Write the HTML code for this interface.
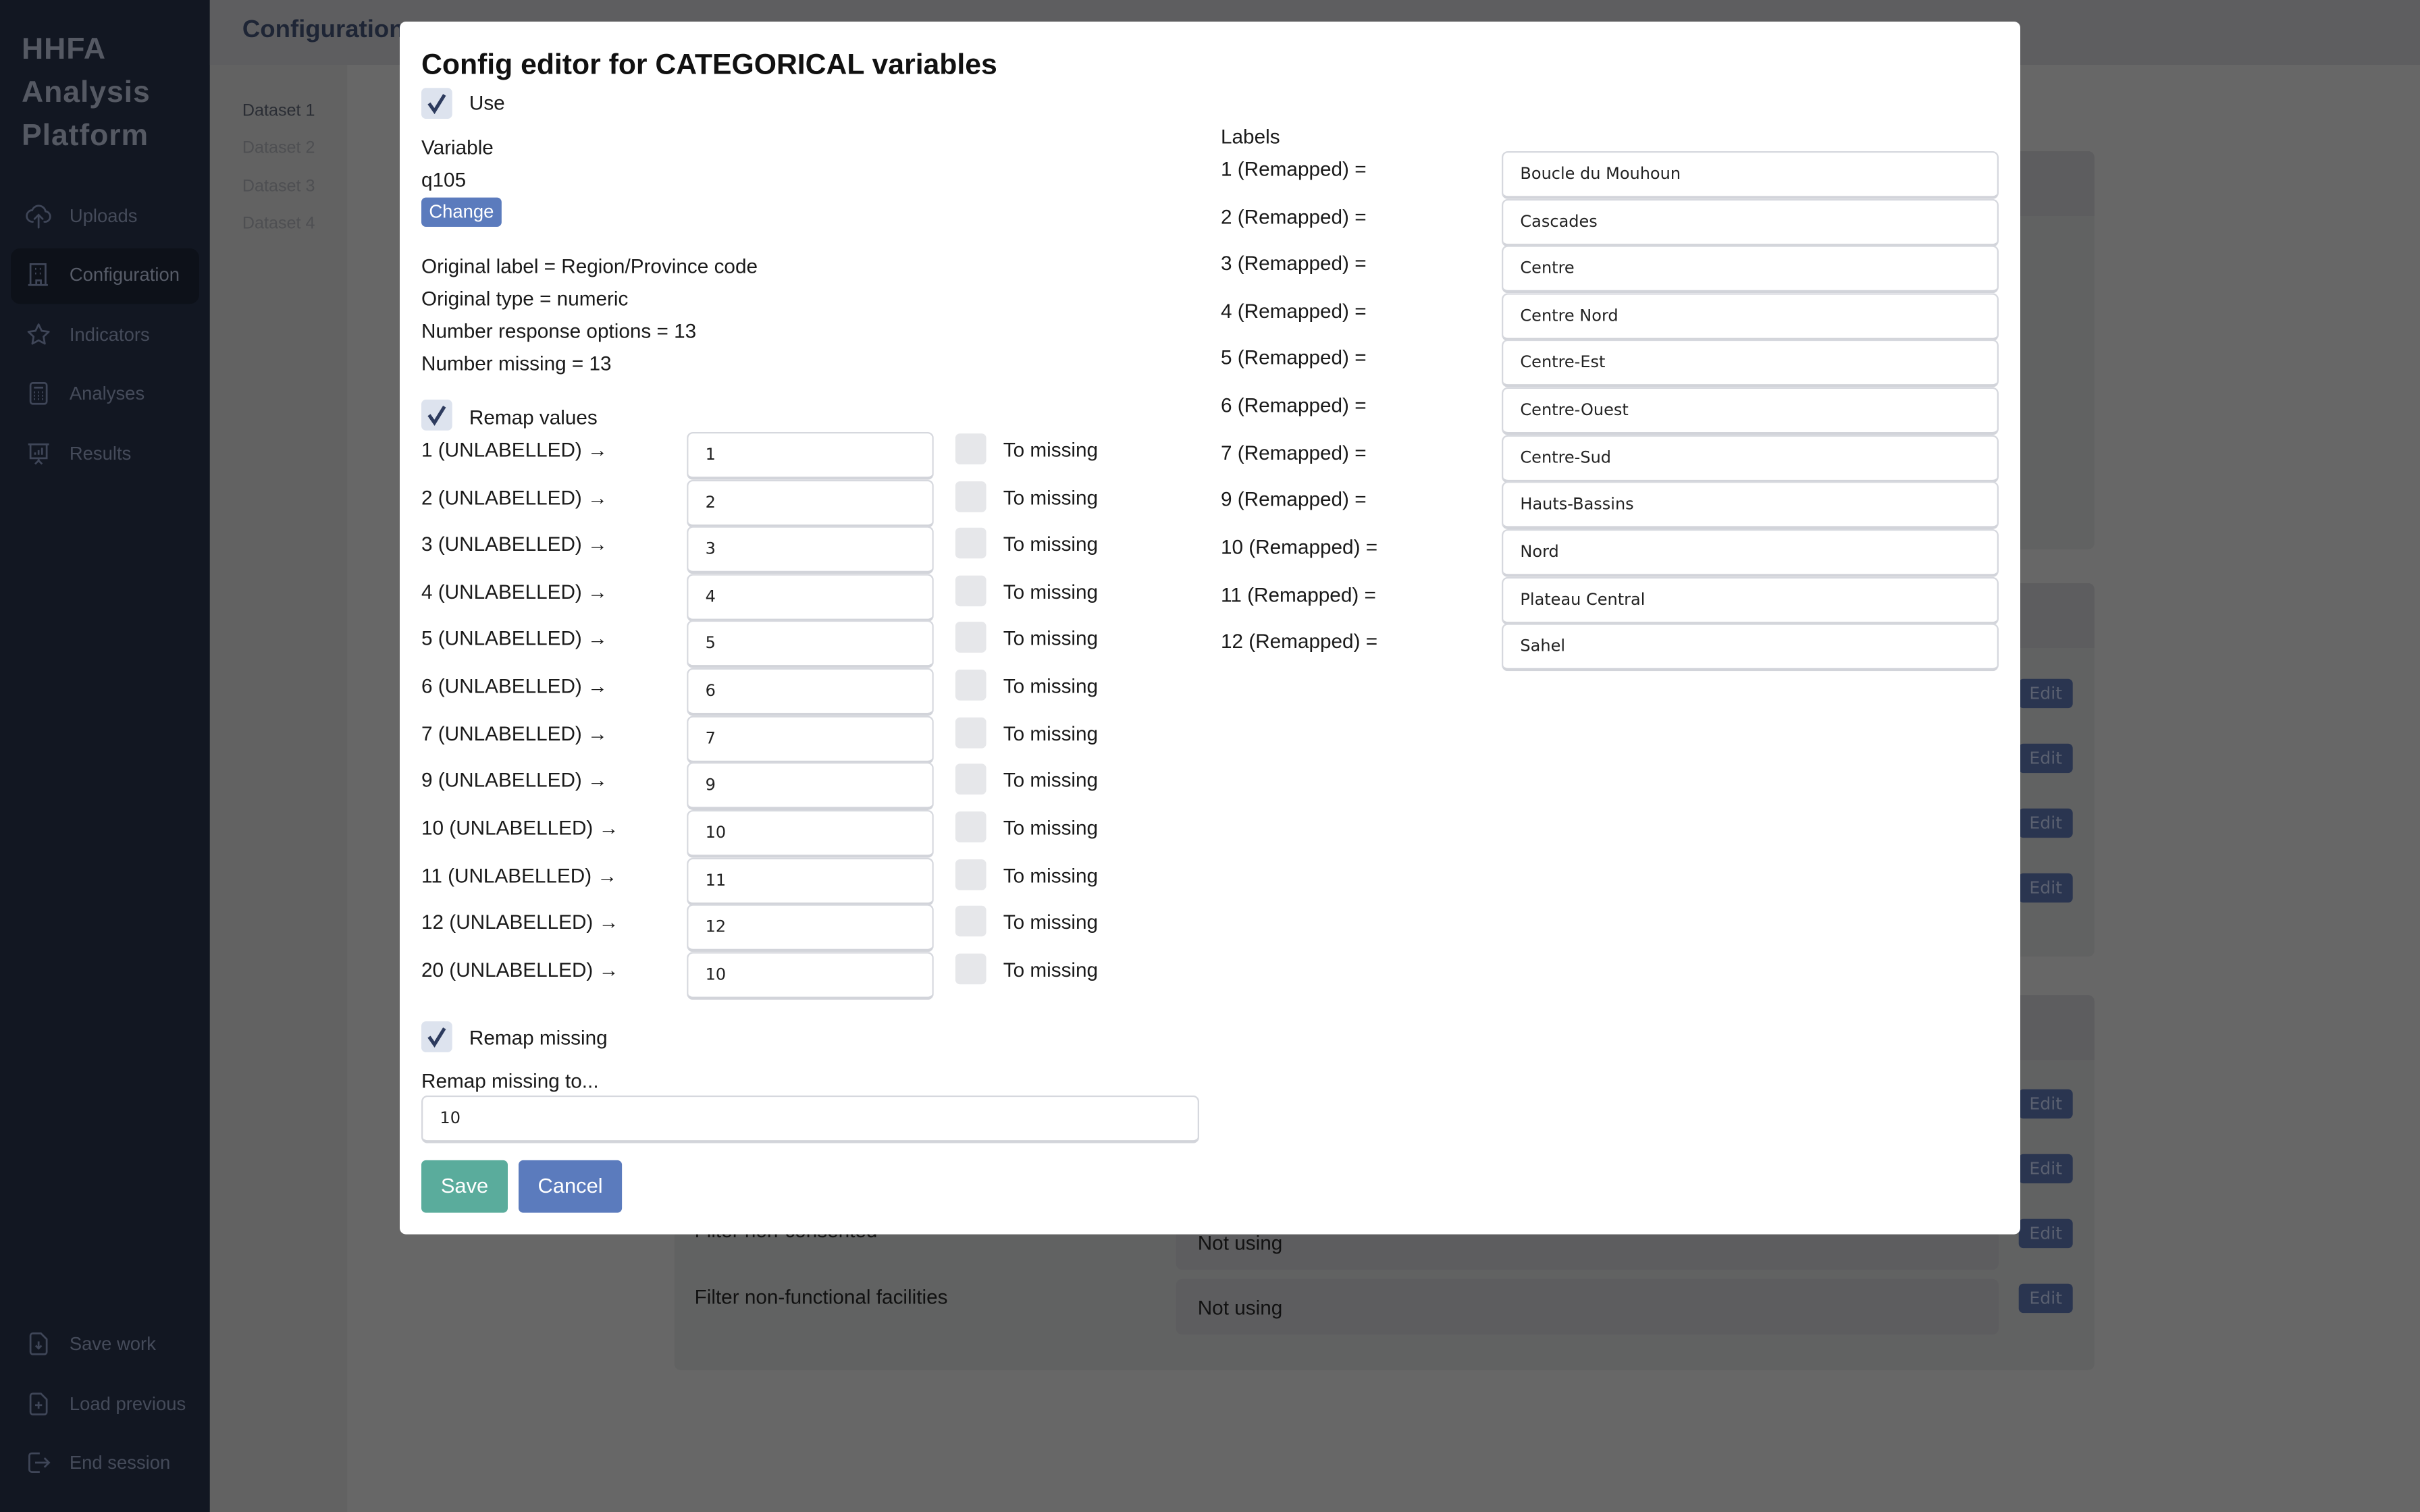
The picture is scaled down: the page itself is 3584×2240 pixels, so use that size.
<!DOCTYPE html>
<html><head><meta charset="utf-8">
<style>
*{box-sizing:border-box;margin:0;padding:0}
html,body{width:3584px;height:2240px;overflow:hidden;background:#676767}
#w{position:absolute;left:0;top:0;width:1568px;height:980px;transform:scale(2.2857143);transform-origin:0 0;font-family:"Liberation Sans",sans-serif;background:#676767}
.a{position:absolute;white-space:nowrap}
.t{font-size:13px;line-height:18px;color:#1a1a1a}
.nav{font-size:12px;color:#454b5a;line-height:16px}
.ic{position:absolute;left:16px;width:18px;height:18px}
.inp{position:absolute;background:#fff;border:1px solid #d6d8de;border-bottom:2px solid #d2d4da;border-radius:4px;font-family:"DejaVu Sans",sans-serif;font-size:10.5px;color:#222;padding-left:11px;line-height:28px}
.cb{position:absolute;width:20px;height:20px;border-radius:3px;background:#dde3ee}
.cb svg{position:absolute;left:3px;top:3px}
.cbe{position:absolute;width:20px;height:20px;border-radius:3px;background:#e6e7ea}
.edit{position:absolute;left:1308px;width:35px;height:19px;background:#2a3550;border-radius:3px;color:#5a6070;font-size:11px;text-align:center;line-height:19px;font-family:"DejaVu Sans",sans-serif}
</style></head><body><div id="w">
<div class="a" style="left:0;top:0;width:136px;height:980px;background:#121722"></div>
<div class="a" style="left:14px;top:18px;font-size:19.5px;line-height:28px;font-weight:bold;color:#555963;white-space:normal;width:120px;letter-spacing:0.4px">HHFA<br>Analysis<br>Platform</div>
<div class="a" style="left:7px;top:161px;width:122px;height:36px;background:#0d1119;border-radius:6px"></div>
<svg class="ic" style="top:131px" viewBox="0 0 24 24" fill="none" stroke="#3f4658" stroke-width="1.6" stroke-linecap="round"><path d="M7 17a5 5 0 0 1-.5-10A6 6 0 0 1 18 8a4.5 4.5 0 0 1-1 9"/><path d="M12 22V11M8.5 14.5 12 11l3.5 3.5"/></svg>
<div class="a nav" style="left:45px;top:132px">Uploads</div>
<svg class="ic" style="top:169px" viewBox="0 0 24 24" fill="none" stroke="#3f4658" stroke-width="1.6"><path d="M5 21V3h13v18M3 21h17M10 21v-4h4v4M9 7h1M13 7h1M9 11h1M13 11h1"/></svg>
<div class="a nav" style="left:45px;top:170px;color:#575c68">Configuration</div>
<svg class="ic" style="top:208px" viewBox="0 0 24 24" fill="none" stroke="#3f4658" stroke-width="1.6" stroke-linejoin="round"><path d="M12 3l2.7 5.6 6.1.8-4.5 4.2 1.1 6.1L12 16.8 6.6 19.7l1.1-6.1L3.2 9.4l6.1-.8z"/></svg>
<div class="a nav" style="left:45px;top:209px">Indicators</div>
<svg class="ic" style="top:246px" viewBox="0 0 24 24" fill="none" stroke="#3f4658" stroke-width="1.6"><rect x="5" y="3" width="14" height="18" rx="2"/><path d="M8 7h8M8 11h1M11.5 11h1M15 11h1M8 14h1M11.5 14h1M15 14h1M8 17h1M11.5 17h1M15 17h1"/></svg>
<div class="a nav" style="left:45px;top:247px">Analyses</div>
<svg class="ic" style="top:285px" viewBox="0 0 24 24" fill="none" stroke="#3f4658" stroke-width="1.6"><path d="M3 4h18M5 4v12h14V4M9 13v-2M12 13V9M15 13V7M12 16v2M9 21l3-3 3 3"/></svg>
<div class="a nav" style="left:45px;top:286px">Results</div>
<svg class="ic" style="top:862px" viewBox="0 0 24 24" fill="none" stroke="#3f4658" stroke-width="1.6"><path d="M14 3H7a2 2 0 0 0-2 2v14a2 2 0 0 0 2 2h10a2 2 0 0 0 2-2V8z"/><path d="M12 10v6M9.5 13.5 12 16l2.5-2.5"/></svg>
<div class="a nav" style="left:45px;top:863px">Save work</div>
<svg class="ic" style="top:901px" viewBox="0 0 24 24" fill="none" stroke="#3f4658" stroke-width="1.6"><path d="M14 3H7a2 2 0 0 0-2 2v14a2 2 0 0 0 2 2h10a2 2 0 0 0 2-2V8z"/><path d="M12 10v6M9 13h6"/></svg>
<div class="a nav" style="left:45px;top:902px">Load previous</div>
<svg class="ic" style="top:939px" viewBox="0 0 24 24" fill="none" stroke="#3f4658" stroke-width="1.6"><path d="M13 4H6a2 2 0 0 0-2 2v12a2 2 0 0 0 2 2h7M9 12h12M17 8l4 4-4 4"/></svg>
<div class="a nav" style="left:45px;top:940px">End session</div>
<div class="a" style="left:136px;top:0;width:89px;height:980px;background:#626262"></div>
<div class="a" style="left:136px;top:0;width:1432px;height:42px;background:#5e5e60"></div>
<div class="a" style="left:157px;top:11px;font-size:16px;font-weight:bold;color:#1e2535">Configuration</div>
<div class="a" style="left:157px;top:66px;font-size:11px;color:#2a2d34">Dataset 1</div>
<div class="a" style="left:157px;top:90px;font-size:11px;color:#4e4f52">Dataset 2</div>
<div class="a" style="left:157px;top:115px;font-size:11px;color:#4e4f52">Dataset 3</div>
<div class="a" style="left:157px;top:139px;font-size:11px;color:#4e4f52">Dataset 4</div>
<div class="a" style="left:437px;top:98px;width:920px;height:258px;background:#616262;border-radius:4px"></div>
<div class="a" style="left:437px;top:98px;width:920px;height:42px;background:#5d5d5f;border-radius:4px 4px 0 0"></div>
<div class="a" style="left:437px;top:378px;width:920px;height:242px;background:#616262;border-radius:4px"></div>
<div class="a" style="left:437px;top:378px;width:920px;height:42px;background:#5d5d5f;border-radius:4px 4px 0 0"></div>
<div class="a" style="left:437px;top:645px;width:920px;height:243px;background:#616262;border-radius:4px"></div>
<div class="a" style="left:437px;top:645px;width:920px;height:42px;background:#5d5d5f;border-radius:4px 4px 0 0"></div>
<div class="edit" style="top:440px">Edit</div><div class="edit" style="top:482px">Edit</div><div class="edit" style="top:524px">Edit</div><div class="edit" style="top:566px">Edit</div>
<div class="edit" style="top:706px">Edit</div><div class="edit" style="top:748px">Edit</div><div class="edit" style="top:790px">Edit</div><div class="edit" style="top:832px">Edit</div>
<div class="a" style="left:762px;top:786px;width:533px;height:37px;background:#5d5d5f;border-radius:4px"></div>
<div class="a" style="left:762px;top:829px;width:533px;height:36px;background:#5d5d5f;border-radius:4px"></div>
<div class="a t" style="left:450px;top:789px;color:#111">Filter non-consented</div>
<div class="a t" style="left:776px;top:797px;color:#111">Not using</div>
<div class="a t" style="left:450px;top:832px;color:#111">Filter non-functional facilities</div>
<div class="a t" style="left:776px;top:839px;color:#111">Not using</div>
<div class="a" style="left:259px;top:14px;width:1050px;height:786px;background:#fff;border-radius:4px"></div>
<div class="a" style="left:273px;top:29px;font-size:18.7px;font-weight:bold;color:#111;line-height:26px">Config editor for CATEGORICAL variables</div>
<div class="cb" style="left:273px;top:57px"><svg width="14" height="14" viewBox="0 0 14 14"><path d="M2 7l3.5 5L12 1.5" fill="none" stroke="#2d3b5e" stroke-width="2.2"/></svg></div>
<div class="a t" style="left:304px;top:58px">Use</div>
<div class="a t" style="left:273px;top:87px">Variable</div>
<div class="a t" style="left:273px;top:108px">q105</div>
<div class="a" style="left:273px;top:128px;width:52px;height:19px;background:#5b7bbd;border-radius:3px;color:#fff;font-size:12px;line-height:19px;text-align:center">Change</div>
<div class="a t" style="left:273px;top:164px">Original label = Region/Province code</div>
<div class="a t" style="left:273px;top:185px">Original type = numeric</div>
<div class="a t" style="left:273px;top:206px">Number response options = 13</div>
<div class="a t" style="left:273px;top:227px">Number missing = 13</div>
<div class="cb" style="left:273px;top:259px"><svg width="14" height="14" viewBox="0 0 14 14"><path d="M2 7l3.5 5L12 1.5" fill="none" stroke="#2d3b5e" stroke-width="2.2"/></svg></div>
<div class="a t" style="left:304px;top:262px">Remap values</div>

<div class="a t" style="left:273px;top:283px">1 (UNLABELLED) →</div><div class="inp" style="left:445px;top:280px;width:160px;height:31px">1</div><div class="cbe" style="left:619px;top:281px"></div><div class="a t" style="left:650px;top:283px">To missing</div>
<div class="a t" style="left:273px;top:314px">2 (UNLABELLED) →</div><div class="inp" style="left:445px;top:311px;width:160px;height:31px">2</div><div class="cbe" style="left:619px;top:312px"></div><div class="a t" style="left:650px;top:314px">To missing</div>
<div class="a t" style="left:273px;top:344px">3 (UNLABELLED) →</div><div class="inp" style="left:445px;top:341px;width:160px;height:31px">3</div><div class="cbe" style="left:619px;top:342px"></div><div class="a t" style="left:650px;top:344px">To missing</div>
<div class="a t" style="left:273px;top:375px">4 (UNLABELLED) →</div><div class="inp" style="left:445px;top:372px;width:160px;height:31px">4</div><div class="cbe" style="left:619px;top:373px"></div><div class="a t" style="left:650px;top:375px">To missing</div>
<div class="a t" style="left:273px;top:405px">5 (UNLABELLED) →</div><div class="inp" style="left:445px;top:402px;width:160px;height:31px">5</div><div class="cbe" style="left:619px;top:403px"></div><div class="a t" style="left:650px;top:405px">To missing</div>
<div class="a t" style="left:273px;top:436px">6 (UNLABELLED) →</div><div class="inp" style="left:445px;top:433px;width:160px;height:31px">6</div><div class="cbe" style="left:619px;top:434px"></div><div class="a t" style="left:650px;top:436px">To missing</div>
<div class="a t" style="left:273px;top:467px">7 (UNLABELLED) →</div><div class="inp" style="left:445px;top:464px;width:160px;height:31px">7</div><div class="cbe" style="left:619px;top:465px"></div><div class="a t" style="left:650px;top:467px">To missing</div>
<div class="a t" style="left:273px;top:497px">9 (UNLABELLED) →</div><div class="inp" style="left:445px;top:494px;width:160px;height:31px">9</div><div class="cbe" style="left:619px;top:495px"></div><div class="a t" style="left:650px;top:497px">To missing</div>
<div class="a t" style="left:273px;top:528px">10 (UNLABELLED) →</div><div class="inp" style="left:445px;top:525px;width:160px;height:31px">10</div><div class="cbe" style="left:619px;top:526px"></div><div class="a t" style="left:650px;top:528px">To missing</div>
<div class="a t" style="left:273px;top:559px">11 (UNLABELLED) →</div><div class="inp" style="left:445px;top:556px;width:160px;height:31px">11</div><div class="cbe" style="left:619px;top:557px"></div><div class="a t" style="left:650px;top:559px">To missing</div>
<div class="a t" style="left:273px;top:589px">12 (UNLABELLED) →</div><div class="inp" style="left:445px;top:586px;width:160px;height:31px">12</div><div class="cbe" style="left:619px;top:587px"></div><div class="a t" style="left:650px;top:589px">To missing</div>
<div class="a t" style="left:273px;top:620px">20 (UNLABELLED) →</div><div class="inp" style="left:445px;top:617px;width:160px;height:31px">10</div><div class="cbe" style="left:619px;top:618px"></div><div class="a t" style="left:650px;top:620px">To missing</div>

<div class="cb" style="left:273px;top:662px"><svg width="14" height="14" viewBox="0 0 14 14"><path d="M2 7l3.5 5L12 1.5" fill="none" stroke="#2d3b5e" stroke-width="2.2"/></svg></div>
<div class="a t" style="left:304px;top:664px">Remap missing</div>
<div class="a t" style="left:273px;top:692px">Remap missing to...</div>
<div class="inp" style="left:273px;top:710px;width:504px;height:31px">10</div>
<div class="a" style="left:273px;top:752px;width:56px;height:34px;background:#5aac9c;border-radius:3px;color:#fff;font-size:13.5px;line-height:34px;text-align:center">Save</div>
<div class="a" style="left:336px;top:752px;width:67px;height:34px;background:#5b7bbd;border-radius:3px;color:#fff;font-size:13.5px;line-height:34px;text-align:center">Cancel</div>

<div class="a t" style="left:791px;top:80px">Labels</div>
<div class="a t" style="left:791px;top:101px">1 (Remapped) =</div><div class="inp" style="left:973px;top:98px;width:322px;height:31px">Boucle du Mouhoun</div>
<div class="a t" style="left:791px;top:132px">2 (Remapped) =</div><div class="inp" style="left:973px;top:129px;width:322px;height:31px">Cascades</div>
<div class="a t" style="left:791px;top:162px">3 (Remapped) =</div><div class="inp" style="left:973px;top:159px;width:322px;height:31px">Centre</div>
<div class="a t" style="left:791px;top:193px">4 (Remapped) =</div><div class="inp" style="left:973px;top:190px;width:322px;height:31px">Centre Nord</div>
<div class="a t" style="left:791px;top:223px">5 (Remapped) =</div><div class="inp" style="left:973px;top:220px;width:322px;height:31px">Centre-Est</div>
<div class="a t" style="left:791px;top:254px">6 (Remapped) =</div><div class="inp" style="left:973px;top:251px;width:322px;height:31px">Centre-Ouest</div>
<div class="a t" style="left:791px;top:285px">7 (Remapped) =</div><div class="inp" style="left:973px;top:282px;width:322px;height:31px">Centre-Sud</div>
<div class="a t" style="left:791px;top:315px">9 (Remapped) =</div><div class="inp" style="left:973px;top:312px;width:322px;height:31px">Hauts-Bassins</div>
<div class="a t" style="left:791px;top:346px">10 (Remapped) =</div><div class="inp" style="left:973px;top:343px;width:322px;height:31px">Nord</div>
<div class="a t" style="left:791px;top:377px">11 (Remapped) =</div><div class="inp" style="left:973px;top:374px;width:322px;height:31px">Plateau Central</div>
<div class="a t" style="left:791px;top:407px">12 (Remapped) =</div><div class="inp" style="left:973px;top:404px;width:322px;height:31px">Sahel</div>
</div></body></html>
